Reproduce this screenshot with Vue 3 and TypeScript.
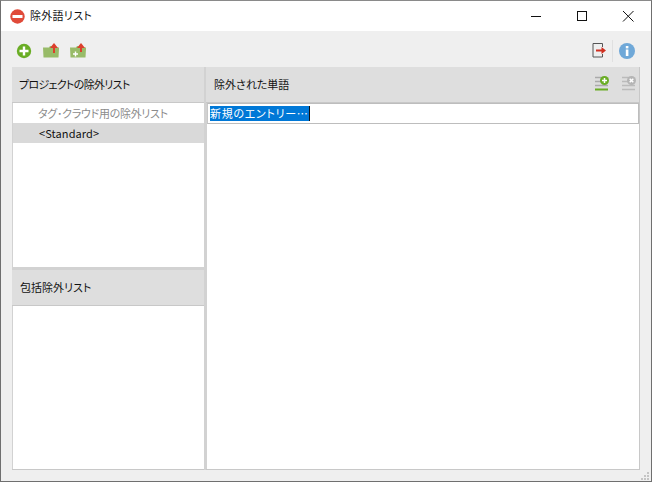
<script setup lang="ts">
const projectLists: { label: string; muted: boolean; selected: boolean }[] = [
  { label: 'タグ･クラウド用の除外リスト', muted: true, selected: false },
  { label: '<Standard>', muted: false, selected: true },
]
</script>

<template>
  <div class="window">
    <header class="titlebar">
      <svg class="app-icon" width="15" height="15" viewBox="0 0 15 15"><circle cx="7.500" cy="7.500" r="7.200" fill="#e04a39" /><rect x="2.500" y="6" width="10" height="3" fill="#fff" /></svg>
      <span class="title">除外語リスト</span>
      <div class="controls">
        <svg width="46" height="30" viewBox="0 0 46 30"><path d="M18 15.500h10" stroke="#111" fill="none" /></svg>
        <svg width="46" height="30" viewBox="0 0 46 30"><rect x="18.500" y="10.500" width="9" height="9" stroke="#111" fill="none" /></svg>
        <svg width="46" height="30" viewBox="0 0 46 30"><path d="M18 10l10.500 10.500M28.500 10L18 20.500" stroke="#111" fill="none" /></svg>
      </div>
    </header>

    <div class="toolbar">
      <div class="tool-group">
        <svg width="16" height="16" viewBox="0 0 16 16"><circle cx="8" cy="8" r="7.200" fill="#6aad25" /><path d="M8 3.500v9M3.500 8h9" stroke="#fff" stroke-width="2.400" /></svg>
        <svg width="17" height="16" viewBox="0 0 17 16"><path d="M0 4.500h6l1-1.500h3v1.500h6v1.500L15.500 14.500H0.500z" fill="#98bb68" /><path d="M11 10V4" stroke="#dc3f2c" stroke-width="2" /><path d="M7 5l4-5 4 5z" fill="#dc3f2c" /></svg>
        <svg width="17" height="16" viewBox="0 0 17 16"><path d="M0 4.500h6l1-1.500h3v1.500h6v1.500L15.500 14.500H0.500z" fill="#98bb68" /><path d="M11 9V4" stroke="#dc3f2c" stroke-width="2" /><path d="M7 5l4-5 4 5z" fill="#dc3f2c" /><path d="M5.500 8.500v5M3 11h5" stroke="#fff" stroke-width="1.400" /></svg>
      </div>
      <div class="tool-group tool-group-end">
        <svg width="14" height="15" viewBox="0 0 14 15"><path d="M10.500 4V0.500h-9.500v13.500h9.500V11" stroke="#555" stroke-width="1" fill="none" /><path d="M4 6.500h5.500V4l4.500 3.500-4.500 3.500V8.500H4z" fill="#cf2f20" /></svg>
        <span class="tool-sep"></span>
        <svg width="16" height="16" viewBox="0 0 16 16"><circle cx="8" cy="8" r="8" fill="#6fa8d8" /><rect x="6.800" y="6.500" width="2.600" height="6.500" fill="#fff" /><rect x="6.800" y="3" width="2.600" height="2.400" fill="#fff" /></svg>
      </div>
    </div>

    <main class="content">
      <aside class="left-column">
        <section class="panel top-panel">
          <h2 class="panel-header project-header"><span class="lift">プロジェクトの除外リスト</span></h2>
          <ul class="list">
            <li
              v-for="item in projectLists"
              :key="item.label"
              class="list-row"
              :class="{ muted: item.muted, selected: item.selected }"
            >{{ item.label }}</li>
          </ul>
        </section>
        <section class="panel bottom-panel">
          <h2 class="panel-header bottom-header"><span class="lift">包括除外リスト</span></h2>
          <div class="list"></div>
        </section>
      </aside>

      <section class="panel right-panel">
        <div class="panel-header right-header">
          <h2 class="header-text lift">除外された単語</h2>
          <div class="header-icons">
            <svg width="15" height="15" viewBox="0 0 15 15"><path d="M0 1.500h8M0 5.500h13M0 9.500h13" stroke="#aaa" stroke-width="1.500" /><path d="M0 13.500h13" stroke="#6aad25" stroke-width="2" /><circle cx="9.500" cy="4.500" r="4.500" fill="#6aad25" /><path d="M9.500 2v5M7 4.500h5" stroke="#fff" stroke-width="1.500" /></svg>
            <svg width="15" height="15" viewBox="0 0 15 15"><path d="M0 1.500h8M0 5.500h13M0 9.500h13M0 13.500h13" stroke="#bbb" stroke-width="1.500" /><circle cx="9.500" cy="4.500" r="4.500" fill="#b5b5b5" /><path d="M7.700 2.700l3.600 3.600M11.300 2.700L7.700 6.300" stroke="#fff" stroke-width="1.500" /></svg>
          </div>
        </div>
        <div class="list">
          <div class="entry"><span class="entry-text">新規のエントリー…</span></div>
        </div>
      </section>
    </main>

    <div class="grip">
      <i></i><i></i><i></i><i></i><i></i><i></i>
    </div>
  </div>
</template>

<style scoped>
.window {
  position: relative;
  box-sizing: border-box;
  width: 652px;
  height: 482px;
  display: flex;
  flex-direction: column;
  background: #efefef;
  border: 1px solid #6f6f6f;
  border-top-color: #8a8a8a;
  font-family: "Noto Sans CJK JP", "Liberation Sans", sans-serif;
  font-size: 11px;
  font-feature-settings: "palt";
  color: #111;
  overflow: hidden;
}
.titlebar {
  flex: none;
  height: 30px;
  display: flex;
  align-items: center;
  background: #fff;
  padding-left: 9px;
}
.app-icon { flex: none; }
.title { margin: 0 0 2px 5px; letter-spacing: 0.3px; }
.controls { margin-left: auto; display: flex; }
.controls svg { display: block; width: 46px; height: 30px; }
.toolbar {
  flex: none;
  height: 36px;
  display: flex;
  align-items: center;
  justify-content: space-between;
  padding: 3px 16px 0 15px;
  box-sizing: border-box;
}
.tool-group { display: flex; align-items: center; gap: 10px; }
.tool-group svg:first-child { margin-right: 1px; }
.tool-group-end { gap: 6px; }
.tool-group-end svg:first-child { margin-right: 0; }
.tool-sep { width: 1px; height: 22px; background: #e0e0e0; }
.content {
  flex: 1;
  display: flex;
  min-height: 0;
  padding: 0 11px 11px 11px;
}
.left-column {
  flex: none;
  width: 192px;
  display: flex;
  flex-direction: column;
  border-right: 2px solid #d2d2d2;
}
.panel { display: flex; flex-direction: column; min-height: 0; background: #fff; }
.top-panel { height: 200px; flex: none; }
.bottom-panel { flex: 1; border-top: 3px solid #d2d2d2; border-bottom: 1px solid #c8c8c8; }
.right-panel { flex: 1; border-right: 1px solid #c8c8c8; border-bottom: 1px solid #c8c8c8; }
.panel-header {
  flex: none;
  box-sizing: border-box;
  height: 36px;
  margin: 0;
  padding: 0 7px;
  display: flex;
  align-items: center;
  font-size: 11px;
  font-weight: 400;
  background: #dedede;
  border-bottom: 1px solid #c8c8c8;
}
.lift { margin-bottom: 2px; }
.project-header { letter-spacing: -0.7px; }
.bottom-header { padding-left: 8px; }
.right-header { justify-content: space-between; padding: 0 2px 0 8px; }
.header-text { font-size: 11px; font-weight: 400; margin-top: 0; }
.header-icons { display: flex; gap: 12px; margin-bottom: 3px; }
.list {
  flex: 1;
  margin: 0;
  padding: 0;
  list-style: none;
  background: #fff;
  border-left: 1px solid #d2d2d2;
  min-height: 0;
}
.list-row {
  height: 20px;
  line-height: 20px;
  padding-left: 25px;
  letter-spacing: -0.3px;
}
.selected { padding-left: 26px; letter-spacing: 0.1px; background: #d9d9d9; }
.muted { color: #8b8b8b; }
.entry {
  height: 21px;
  box-sizing: border-box;
  border: 1px solid #bdbdbd;
  border-left-color: #c8c8c8;
  display: flex;
  align-items: center;
  padding-left: 2px;
}
.entry-text {
  height: 15px;
  line-height: 15px;
  background: #0078d7;
  color: #fff;
  letter-spacing: 0.7px;
  border-right: 1px solid #111;
}
.grip {
  position: absolute;
  right: 1px;
  bottom: 1px;
  width: 9px;
  display: grid;
  grid-template-columns: repeat(3, 2px);
  grid-template-rows: repeat(3, 2px);
  gap: 1px;
}
.grip i { background: #c4c4c4; }
.grip i:nth-child(1) { grid-area: 1 / 3; }
.grip i:nth-child(2) { grid-area: 2 / 2; }
.grip i:nth-child(3) { grid-area: 2 / 3; }
.grip i:nth-child(4) { grid-area: 3 / 1; }
.grip i:nth-child(5) { grid-area: 3 / 2; }
.grip i:nth-child(6) { grid-area: 3 / 3; }
</style>
